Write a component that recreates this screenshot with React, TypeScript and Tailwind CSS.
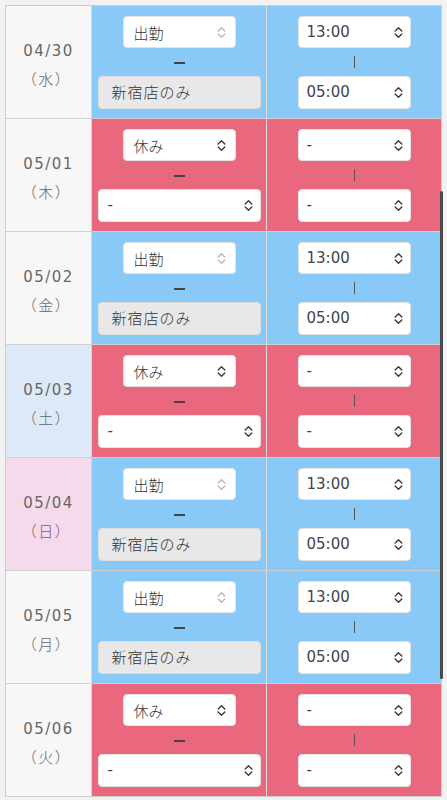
import React from "react";

type Row = {
  date: string;
  wd: string;
  off: boolean;
  dateBg: string;
};

const rows: Row[] = [
  { date: "04/30", wd: "（水）", off: false, dateBg: "bg-[#f7f7f7]" },
  { date: "05/01", wd: "（木）", off: true, dateBg: "bg-[#f7f7f7]" },
  { date: "05/02", wd: "（金）", off: false, dateBg: "bg-[#f7f7f7]" },
  { date: "05/03", wd: "（土）", off: true, dateBg: "bg-[#dbeaf6]" },
  { date: "05/04", wd: "（日）", off: false, dateBg: "bg-[#f7d9ec]" },
  { date: "05/05", wd: "（月）", off: false, dateBg: "bg-[#f7f7f7]" },
  { date: "05/06", wd: "（火）", off: true, dateBg: "bg-[#f7f7f7]" },
];

const JP = { fontFamily: '"Noto Sans CJK JP", sans-serif' };

function Arrows({ light }: { light?: boolean }) {
  return (
    <svg width="9" height="13" viewBox="0 0 9 13" fill="none">
      <path
        d="M1.2 5 L4.5 1.7 L7.8 5 M1.2 8 L4.5 11.3 L7.8 8"
        stroke={light ? "#b8b8b8" : "#3a3a3a"}
        strokeWidth="1.4"
        strokeLinecap="round"
        strokeLinejoin="round"
      />
    </svg>
  );
}

function Select({
  value,
  w,
  h,
  pl,
  pr,
  light,
  jp,
}: {
  value: string;
  w: string;
  h: string;
  pl: string;
  pr: string;
  light?: boolean;
  jp?: boolean;
}) {
  return (
    <div
      className={`${w} ${h} ${pl} ${pr} bg-white rounded-[4px] border border-[#e2e2e2] flex items-center justify-between text-[15px] text-[#444]`}
    >
      {jp ? (
        <span className="leading-none font-light text-[#333]" style={JP}>
          {value}
        </span>
      ) : (
        <span className="leading-none">{value}</span>
      )}
      <Arrows light={light} />
    </div>
  );
}

export default function App() {
  return (
    <div
      className="relative w-[447px] h-[800px] bg-[#f2f2f2] pt-[5px] pl-[5px] overflow-hidden"
      style={{ fontFamily: '"DejaVu Sans", "Noto Sans CJK JP", sans-serif' }}
    >
      <div className="w-[437px] border border-[#cccccc] border-b-0">
        {rows.map((r, i) => {
          const bg = r.off ? "bg-[#ea687e]" : "bg-[#88c9f8]";
          return (
            <div key={i} className="flex h-[113px] border-b border-[#cfcfcf]">
              <div
                className={`w-[86px] ${r.dateBg} border-r border-[#d6d6d6] flex flex-col items-center justify-center text-[15px] text-[#666] tracking-[1.5px]`}
              >
                <div className="leading-[28px] pt-[6px]">{r.date}</div>
                <div className="leading-[28px] -ml-[4px] font-light" style={JP}>
                  {r.wd}
                </div>
              </div>
              <div
                className={`w-[175px] ${bg} border-r border-[#dcdcdc] flex flex-col items-center pt-[10px]`}
              >
                <Select
                  value={r.off ? "休み" : "出勤"}
                  w="w-[113px]"
                  h="h-[32px]"
                  pl="pl-[10px]"
                  pr="pr-[9px]"
                  light={!r.off}
                  jp
                />
                <div className="h-[28px] flex items-center justify-center pt-[2px]">
                  <div className="w-[11px] h-[1.5px] bg-[#444]" />
                </div>
                {r.off ? (
                  <Select
                    value="-"
                    w="w-[163px]"
                    h="h-[33px]"
                    pl="pl-[9px]"
                    pr="pr-[7px]"
                  />
                ) : (
                  <div
                    className="w-[163px] h-[33px] bg-[#e8e8e8] rounded-[4px] border border-[#dddddd] flex items-center pl-[13px] text-[15px] text-[#333] font-light tracking-[1px]"
                    style={JP}
                  >
                    新宿店のみ
                  </div>
                )}
              </div>
              <div className={`flex-1 ${bg} flex flex-col items-center pt-[10px]`}>
                <Select
                  value={r.off ? "-" : "13:00"}
                  w="w-[113px]"
                  h="h-[32px]"
                  pl="pl-[8px]"
                  pr="pr-[7px]"
                />
                <div className="h-[28px] flex items-center justify-center">
                  <div className="w-[1px] h-[12px] bg-[#555]" />
                </div>
                <Select
                  value={r.off ? "-" : "05:00"}
                  w="w-[113px]"
                  h="h-[33px]"
                  pl="pl-[8px]"
                  pr="pr-[7px]"
                />
              </div>
            </div>
          );
        })}
      </div>
      <div className="absolute left-[440px] top-[191px] w-[3px] h-[488px] rounded-full bg-[#4a4a4a]" />
    </div>
  );
}
